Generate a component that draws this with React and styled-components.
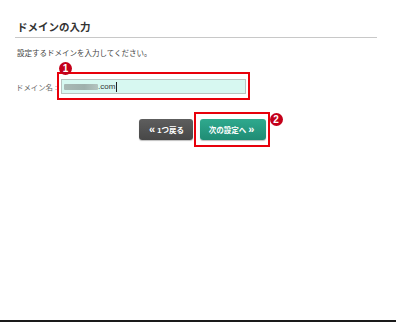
import React from 'react';
import styled, { createGlobalStyle } from 'styled-components';

const GlobalStyle = createGlobalStyle`
  html, body {
    margin: 0;
    padding: 0;
    background: #fff;
  }
  body {
    font-family: "Liberation Sans", "Noto Sans CJK JP", sans-serif;
    color: #333;
  }
`;

const Page = styled.div`
  box-sizing: border-box;
  width: 396px;
  height: 322px;
  padding: 20px 19px 0 15px;
  border-bottom: 2px solid #1a1a1a;
`;

const Heading = styled.h2`
  margin: 0;
  padding: 0 0 3px 2px;
  font-size: 10.5px;
  line-height: 14px;
  font-weight: bold;
  color: #333;
  border-bottom: 1px solid #c8c8c8;
`;

const Lead = styled.p`
  margin: 11px 0 0 2px;
  font-size: 7.5px;
  line-height: 10px;
  color: #444;
`;

const FieldRow = styled.div`
  display: flex;
  align-items: center;
  margin-top: 13px;
  padding-left: 1px;
`;

const Label = styled.span`
  font-size: 7.4px;
  color: #666;
  width: 41px;
  white-space: nowrap;
  overflow: hidden;
`;

const Highlight = styled.div`
  position: relative;
  box-sizing: border-box;
  border: 2px solid #e8000b;
  padding: ${p => p.$pad};
  width: ${p => p.$width};
`;

const Badge = styled.span`
  position: absolute;
  left: ${p => p.$left};
  top: ${p => p.$top};
  width: 13px;
  height: 13px;
  border-radius: 50%;
  background: #c4001a;
  color: #fff;
  font-size: 10px;
  font-weight: bold;
  line-height: 13px;
  text-align: center;
`;

const DomainInput = styled.div`
  box-sizing: border-box;
  display: flex;
  align-items: center;
  height: 15px;
  padding-left: 2px;
  background: #d7f8f1;
  border: 1px solid #b9c4c1;
  font-size: 8px;
  color: #333;
`;

const Blurred = styled.span`
  display: inline-block;
  width: 34px;
  height: 6px;
  background: linear-gradient(90deg, #a9b9b5, #9fb0ac 60%, #b4c4c0);
  border-radius: 1px;
`;

const Caret = styled.span`
  display: inline-block;
  width: 1px;
  height: 10px;
  margin-left: 1px;
  background: #222;
`;

const ButtonRow = styled.div`
  display: flex;
  align-items: center;
  justify-content: center;
  gap: 1px;
  margin-top: 12px;
  padding-left: 16px;
`;

const Button = styled.button`
  box-sizing: border-box;
  height: 21px;
  width: ${p => p.$width};
  border: none;
  border-radius: 3px;
  padding: 0;
  color: #fff;
  font-family: inherit;
  font-size: 7.5px;
  font-weight: bold;
  background: ${p => p.$primary
    ? 'linear-gradient(#2fa98e, #1f8c74)'
    : 'linear-gradient(#5e5e5e, #474747)'};
  box-shadow: 0 1px 1px rgba(0, 0, 0, 0.25);
`;

const Chev = styled.span`
  font-size: 11px;
  line-height: 10px;
  margin: 0 2px;
`;

export default function App() {
  return (
    <>
      <GlobalStyle />
      <Page>
        <Heading>ドメインの入力</Heading>
        <Lead>設定するドメインを入力してください。</Lead>
        <FieldRow>
          <Label>ドメイン名 :</Label>
          <Highlight $pad="5px 2px 4px" $width="193px">
            <Badge $left="0px" $top="-12px">1</Badge>
            <DomainInput>
              <Blurred />
              <span>.com</span>
              <Caret />
            </DomainInput>
          </Highlight>
        </FieldRow>
        <ButtonRow>
          <Button $width="54px"><Chev>«</Chev>1つ戻る</Button>
          <Highlight $pad="5px 2px 5px 4px" $width="76px">
            <Badge $left="calc(100% + 2px)" $top="-1px">2</Badge>
            <Button $primary $width="66px">次の設定へ<Chev>»</Chev></Button>
          </Highlight>
        </ButtonRow>
      </Page>
    </>
  );
}
